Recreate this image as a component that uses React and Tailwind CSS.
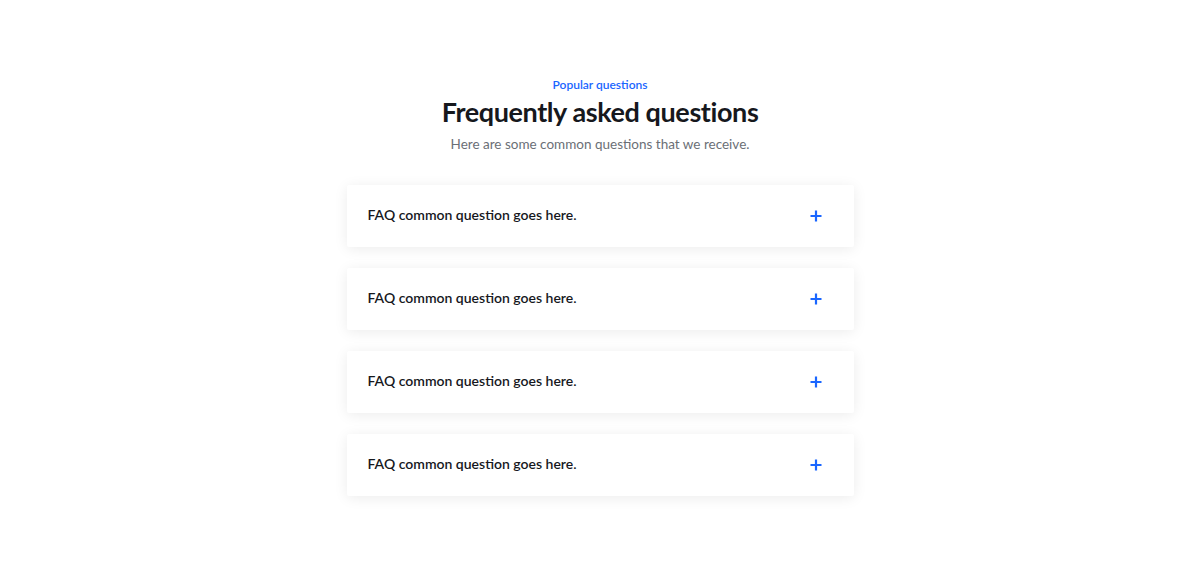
const questions = [
  'FAQ common question goes here.',
  'FAQ common question goes here.',
  'FAQ common question goes here.',
  'FAQ common question goes here.',
];

const PlusIcon = () => (
  <svg width="12" height="12" viewBox="0 0 12 12" className="text-[#1a66ff]">
    <path d="M6 0.5V11.5M0.5 6H11.5" stroke="currentColor" strokeWidth="2.2" />
  </svg>
);

const FaqItem = ({ text }) => {
  return (
    <div className="bg-white h-[62px] flex items-center justify-between pl-[21px] pr-[32px] shadow-[0_2px_14px_rgba(0,0,0,0.08)] rounded-[2px]">
      <span className="text-[14px] font-semibold text-[#16181d] font-['Lato',sans-serif] -mt-[4px]">{text}</span>
      <PlusIcon />
    </div>
  );
};

const App = () => {
  return (
    <div className="w-full min-h-[575px] bg-white flex flex-col items-center pt-[77px]">
      <p className="text-[12px] leading-4 font-semibold text-[#1a66ff] font-['Lato',sans-serif]">Popular questions</p>
      <h1 className="mt-[2px] text-[27px] leading-[34px] font-bold text-[#16181d] font-['Lato',sans-serif] tracking-[-0.4px]">
        Frequently asked questions
      </h1>
      <p className="mt-[5px] text-[13.5px] leading-5 text-[#6b6f76] font-['Lato',sans-serif]">
        Here are some common questions that we receive.
      </p>
      <div className="mt-[31px] w-[507px] flex flex-col gap-[21px]">
        {questions.map((q, i) => (
          <FaqItem key={i} text={q} />
        ))}
      </div>
    </div>
  );
};

export default App;
